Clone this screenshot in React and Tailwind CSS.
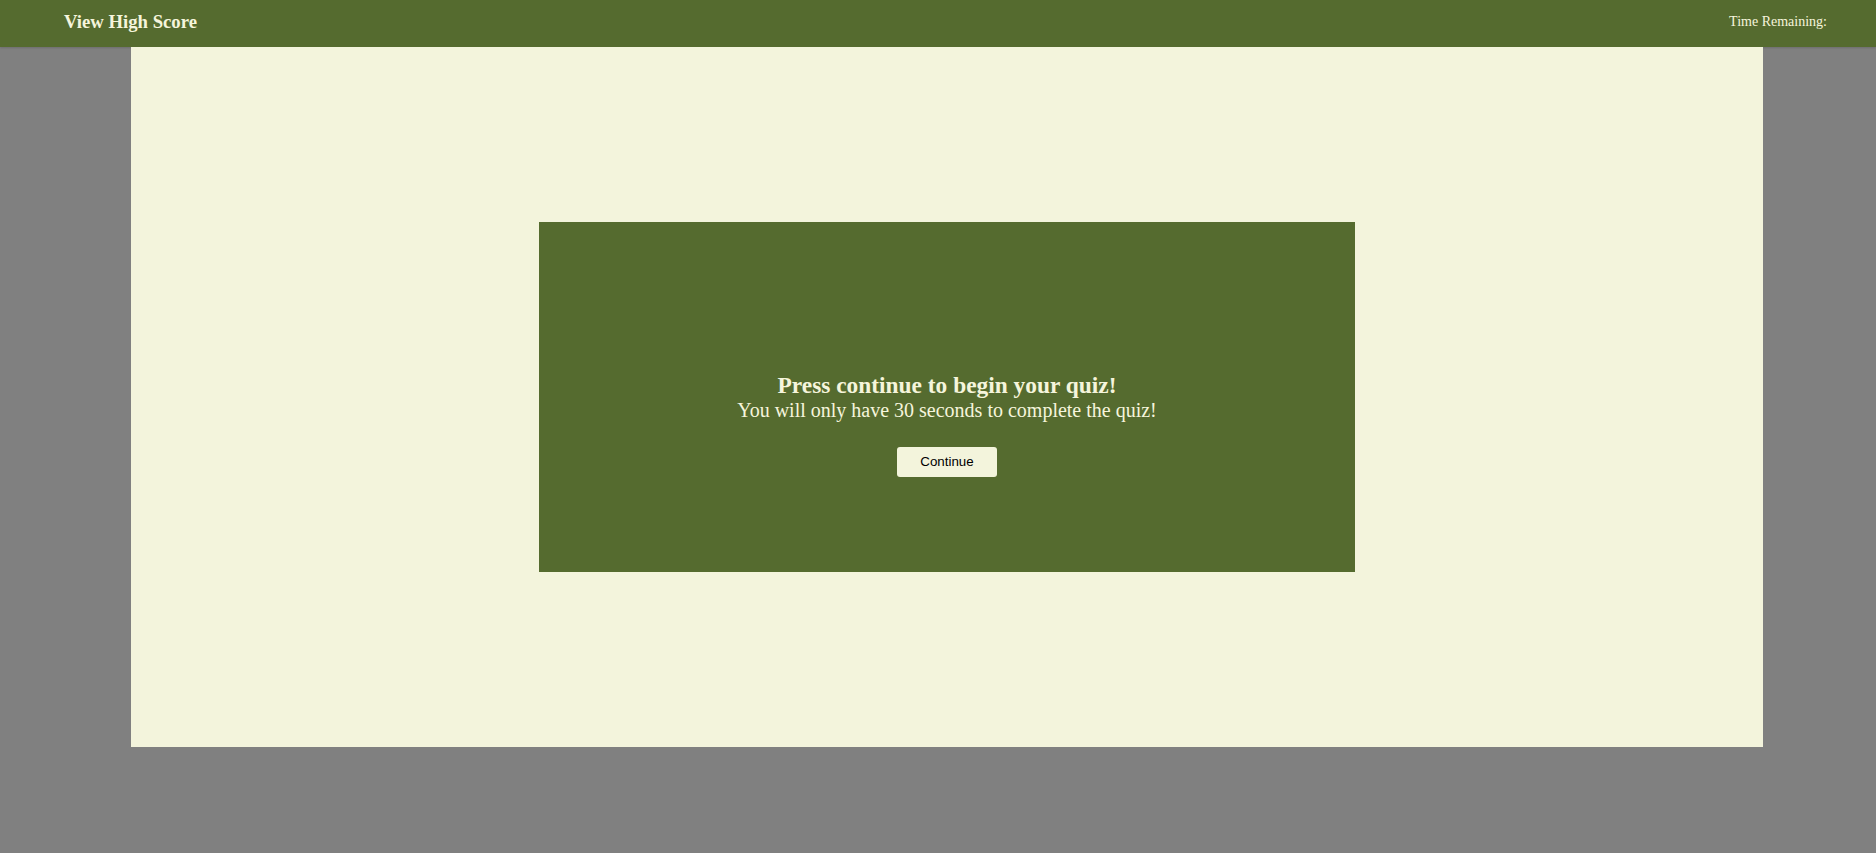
export default function App() {
  return (
    <div className="min-h-[853px] w-full bg-[#808080] font-['Liberation_Serif',serif]">
      <header className="h-[47px] bg-[#556b2f] flex items-center justify-between pl-[64px] pr-[49px] shadow-[0_1px_2px_rgba(0,0,0,0.15)]">
        <h3 className="text-[18.72px] font-bold text-[#f5f5dc] leading-[22px] mt-[-3px]">View High Score</h3>
        <span className="text-[14px] text-[#f5f5dc] leading-[16px] mt-[-3px]">Time Remaining:</span>
      </header>
      <main className="ml-[131px] w-[1632px] h-[700px] bg-[#f3f4dc] pt-[175px]">
        <div className="ml-[408px] w-[816px] h-[350px] bg-[#556b2f] flex flex-col items-center pt-[149px]">
          <h2 className="text-[23.4px] font-bold text-[#f5f5dc] leading-[28px]">Press continue to begin your quiz!</h2>
          <p className="text-[20px] text-[#f5f5dc] leading-[23px]">You will only have 30 seconds to complete the quiz!</p>
          <button className="mt-[25px] w-[100px] h-[30px] rounded-[3px] bg-[#f3f4dc] text-black text-[13.33px] font-['Liberation_Sans',sans-serif] flex items-center justify-center">
            Continue
          </button>
        </div>
      </main>
    </div>
  );
}
